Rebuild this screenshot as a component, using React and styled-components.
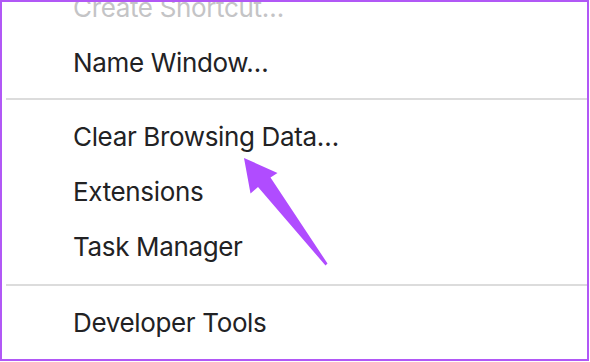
import React from 'react'
import styled, { createGlobalStyle } from 'styled-components'

const GlobalStyle = createGlobalStyle`
  html, body {
    margin: 0;
    padding: 0;
    background: #fff;
  }
  body {
    font-family: Inter, "Liberation Sans", Arial, sans-serif;
    -webkit-font-smoothing: antialiased;
  }
`

const Menu = styled.div`
  position: relative;
  width: 589px;
  height: 361px;
  box-sizing: border-box;
  border: 2px solid #b158f6;
  background: #fff;
  overflow: hidden;
  display: flex;
  flex-direction: column;
`

const Items = styled.div`
  display: flex;
  flex-direction: column;
  margin-top: -22px;
`

const Item = styled.div`
  height: 55px;
  line-height: 55px;
  padding-left: 71px;
  font-size: 26px;
  letter-spacing: -0.35px;
  color: ${p => (p.disabled ? '#c4c4c6' : '#222224')};
  white-space: nowrap;
`

const Separator = styled.div`
  height: 2px;
  margin: ${p => p.$gap || '8px 0 9px 4px'};
  background: #dcdcdc;
`

const Arrow = styled.svg`
  position: absolute;
  left: 0;
  top: 0;
  pointer-events: none;
`

export default function App() {
  return (
    <>
      <GlobalStyle />
      <Menu>
        <Items>
          <Item disabled>Create Shortcut…</Item>
          <Item>Name Window…</Item>
          <Separator />
          <Item>Clear Browsing Data…</Item>
          <Item>Extensions</Item>
          <Item>Task Manager</Item>
          <Separator $gap="10px 0 9px 4px" />
          <Item>Developer Tools</Item>
        </Items>
        <Arrow width="587" height="359" viewBox="2 2 587 359">
          <path
            d="M244 158 L277.5 173 L270.5 177.5 L327.5 263.5 L325.5 265.5 L258 187 L250.5 193.5 Z"
            fill="#b04cff"
          />
        </Arrow>
      </Menu>
    </>
  )
}
